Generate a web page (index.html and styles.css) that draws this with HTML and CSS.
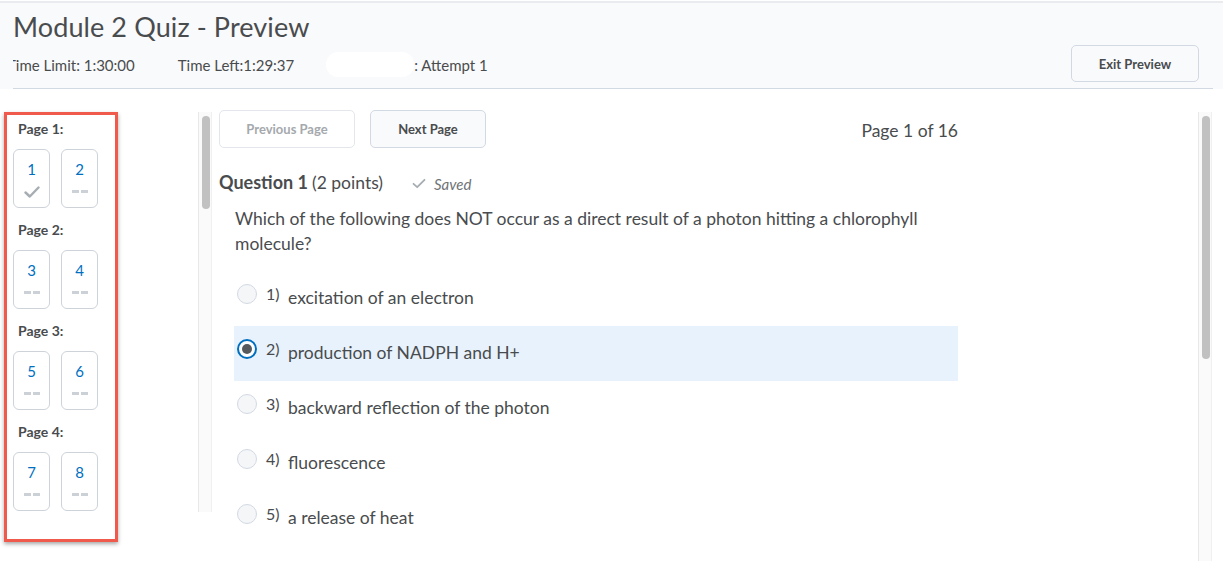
FILE: index.html
```html
<!DOCTYPE html>
<html lang="en">
<head>
<meta charset="utf-8">
<title>Module 2 Quiz - Preview</title>
<link rel="stylesheet" href="styles.css">
</head>
<body>
<header class="header">
  <h1 class="title">Module 2 Quiz - Preview</h1>
  <div class="info-row">
    <div class="info">
      <span class="limit">Time Limit: 1:30:00</span>
      <span class="left">Time Left:1:29:37</span>
      <span class="redact"></span>
      <span class="attempt">: Attempt 1</span>
    </div>
    <button class="btn exit">Exit Preview</button>
  </div>
  <div class="rule"></div>
</header>

<div class="layout">
  <nav class="sidebar">
    <div class="page-group">
      <div class="page-label">Page 1:</div>
      <div class="tiles">
        <div class="tile"><span class="num">1</span>
          <svg class="check" width="16" height="12" viewBox="0 0 16 12"><path d="M1.5 6.5 L5.8 10.5 L14.5 1.5" fill="none" stroke="#a6adb3" stroke-width="2.4" stroke-linecap="round" stroke-linejoin="round"/></svg>
        </div>
        <div class="tile"><span class="num">2</span><span class="dash"><i></i><i></i></span></div>
      </div>
    </div>
    <div class="page-group">
      <div class="page-label">Page 2:</div>
      <div class="tiles">
        <div class="tile"><span class="num">3</span><span class="dash"><i></i><i></i></span></div>
        <div class="tile"><span class="num">4</span><span class="dash"><i></i><i></i></span></div>
      </div>
    </div>
    <div class="page-group">
      <div class="page-label">Page 3:</div>
      <div class="tiles">
        <div class="tile"><span class="num">5</span><span class="dash"><i></i><i></i></span></div>
        <div class="tile"><span class="num">6</span><span class="dash"><i></i><i></i></span></div>
      </div>
    </div>
    <div class="page-group">
      <div class="page-label">Page 4:</div>
      <div class="tiles">
        <div class="tile"><span class="num">7</span><span class="dash"><i></i><i></i></span></div>
        <div class="tile"><span class="num">8</span><span class="dash"><i></i><i></i></span></div>
      </div>
    </div>
  </nav>

  <div class="vscroll short"><div class="thumb"></div></div>

  <main class="main">
    <div class="nav-row">
      <div class="nav-btns">
        <button class="btn prev">Previous Page</button>
        <button class="btn next">Next Page</button>
      </div>
      <div class="page-count">Page 1 of 16</div>
    </div>

    <div class="q-head">
      <span class="q-title">Question 1</span>
      <span class="q-points">(2 points)</span>
      <span class="saved">
        <svg width="14" height="11" viewBox="0 0 14 11"><path d="M1.5 5.8 L5.2 9.2 L12.5 1.8" fill="none" stroke="#a6adb3" stroke-width="1.8" stroke-linecap="round" stroke-linejoin="round"/></svg>
        <em>Saved</em>
      </span>
    </div>

    <p class="q-text">Which of the following does NOT occur as a direct result of a photon hitting a chlorophyll molecule?</p>

    <ul class="options">
      <li class="opt"><span class="radio"></span><span class="opt-num">1)</span><span class="opt-text">excitation of an electron</span></li>
      <li class="opt selected"><span class="radio on"></span><span class="opt-num">2)</span><span class="opt-text">production of NADPH and H+</span></li>
      <li class="opt"><span class="radio"></span><span class="opt-num">3)</span><span class="opt-text">backward reflection of the photon</span></li>
      <li class="opt"><span class="radio"></span><span class="opt-num">4)</span><span class="opt-text">fluorescence</span></li>
      <li class="opt"><span class="radio"></span><span class="opt-num">5)</span><span class="opt-text">a release of heat</span></li>
    </ul>
  </main>

  <div class="vscroll tall"><div class="thumb"></div></div>
</div>
</body>
</html>
```

FILE: styles.css
```css
html, body {
  margin: 0;
  padding: 0;
  height: 561px;
  overflow: hidden;
  background: #ffffff;
  font-family: Lato, "Open Sans", "Liberation Sans", sans-serif;
  color: #494c4e;
}

.header {
  margin-top: 1px;
  border-top: 2px solid #e9ebee;
  background: #f9fafb;
  padding: 7px 10px 0 13px;
}

.title {
  margin: 0;
  font-size: 27px;
  line-height: 34px;
  font-weight: 400;
  color: #494c4e;
  letter-spacing: 0.1px;
}

.info-row {
  display: flex;
  align-items: center;
  justify-content: space-between;
  margin-top: 1px;
  margin-right: 14px;
}

.info {
  display: flex;
  align-items: center;
  overflow: hidden;
  font-size: 15px;
  padding-top: 2px;
}

.limit { margin-left: -6px; margin-right: 43px; }
.left { margin-right: 32px; }
.redact {
  display: inline-block;
  width: 88px;
  height: 25px;
  border-radius: 12px;
  background: #ffffff;
}

.btn {
  font-family: Lato, "Open Sans", "Liberation Sans", sans-serif;
  font-size: 13px;
  font-weight: 700;
  color: #494c4e;
  background: #f9fafb;
  border: 1px solid #d3d9e3;
  border-radius: 5px;
  height: 38px;
  padding: 0;
  cursor: pointer;
}

.exit { width: 128px; height: 37px; }

.rule {
  height: 1px;
  background: #d3d9e3;
  margin-top: 6px;
}

.layout {
  display: flex;
  align-items: flex-start;
  padding-top: 23px;
  height: 449px;
}

.sidebar {
  box-sizing: border-box;
  width: 114px;
  height: 430px;
  margin-left: 4px;
  border: 3px solid #ef5a4d;
  box-shadow: 0 2px 4px rgba(0, 0, 0, 0.35);
  background: #fff;
  padding: 6px 0 0 6px;
  flex: none;
}

.page-group { margin-bottom: 14px; }

.page-label {
  font-size: 14px;
  line-height: 16px;
  font-weight: 700;
  padding-left: 5px;
  margin-bottom: 12px;
}

.tiles {
  display: flex;
  gap: 11px;
}

.tile {
  box-sizing: border-box;
  width: 37px;
  height: 59px;
  border: 1px solid #cdd3d9;
  border-radius: 6px;
  display: flex;
  flex-direction: column;
  align-items: center;
  padding-top: 10px;
}

.num {
  font-size: 15px;
  line-height: 18px;
  color: #006fbf;
}

.check { margin-top: 8px; }

.dash {
  display: flex;
  gap: 2px;
  margin-top: 12px;
}
.dash i {
  display: block;
  width: 7px;
  height: 3px;
  background: #cbd1d7;
}

.vscroll {
  box-sizing: border-box;
  width: 14px;
  flex: none;
  background: #fafafa;
  border-left: 1px solid #e8e8e8;
  border-right: 1px solid #f0f0f0;
  padding: 4px 0 0 3px;
}
.vscroll .thumb {
  width: 8px;
  border-radius: 4px;
  background: #c1c1c1;
}
.vscroll.short {
  height: 400px;
  margin-left: 80px;
}
.vscroll.short .thumb { height: 93px; }
.vscroll.tall {
  height: 449px;
  margin-left: auto;
  margin-right: 11px;
}
.vscroll.tall .thumb { height: 243px; }

.main {
  width: 739px;
  margin-left: 7px;
  margin-top: -2px;
  flex: none;
}

.nav-row {
  display: flex;
  align-items: center;
  justify-content: space-between;
}

.nav-btns { display: flex; gap: 15px; }

.prev {
  width: 136px;
  background: #ffffff;
  border-color: #e3e7ec;
  color: #a5a9ad;
}
.next { width: 116px; }

.page-count {
  font-size: 17.5px;
  line-height: 22px;
  padding-top: 3px;
}

.q-head {
  display: flex;
  align-items: baseline;
  margin-top: 22px;
  line-height: 24px;
}
.q-title { font-size: 18px; font-weight: 700; }
.q-points { font-size: 17.5px; margin-left: 4px; }
.saved {
  margin-left: 29px;
  font-size: 15px;
  color: #6e7376;
  display: inline-flex;
  align-items: center;
  gap: 8px;
}
.saved em { font-style: italic; }

.q-text {
  margin: 10px 0 0 16px;
  font-size: 17.5px;
  line-height: 25px;
}

.options {
  list-style: none;
  margin: 15px 0 0 15px;
  padding: 0;
}

.opt {
  height: 55px;
  display: flex;
  align-items: center;
  padding-left: 3px;
}
.opt.selected { background: #e8f2fc; }

.radio {
  box-sizing: border-box;
  width: 20px;
  height: 20px;
  border-radius: 50%;
  border: 1px solid #d3d9e3;
  background: #f4f6f8;
  margin-bottom: 9px;
  flex: none;
  display: flex;
  align-items: center;
  justify-content: center;
}
.radio.on {
  border: 2px solid #006fbf;
  background: #ffffff;
}
.radio.on::after {
  content: "";
  width: 10px;
  height: 10px;
  border-radius: 50%;
  background: #565a5c;
}

.opt-num {
  font-size: 16px;
  margin-left: 9px;
  margin-bottom: 10px;
  width: 22px;
}

.opt-text {
  font-size: 17.5px;
  margin-top: -2px;
}
```
